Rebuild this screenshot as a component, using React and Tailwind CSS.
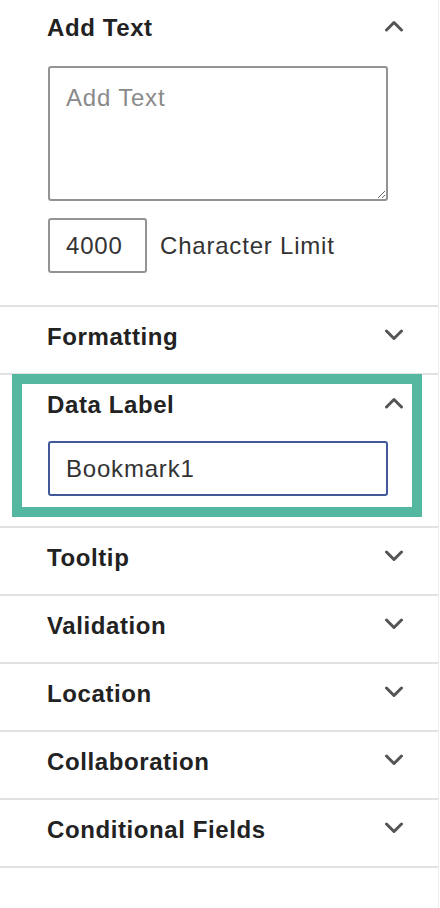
import React from "react";

const Chevron = ({ up }) => (
  <svg width="20" height="12" viewBox="0 0 20 12" className="shrink-0">
    <polyline
      points={up ? "2.5,10 10,2.5 17.5,10" : "2.5,2 10,9.5 17.5,2"}
      fill="none"
      stroke="#555"
      strokeWidth="3"
      strokeLinecap="round"
      strokeLinejoin="round"
    />
  </svg>
);

const Header = ({ title, up }) => (
  <div className="flex items-center justify-between pl-[47px] pr-[34px] h-[32px]">
    <span className="text-[24px] font-bold tracking-[0.6px] text-[#222] leading-[32px]">{title}</span>
    <span className="-mt-[4px] flex">
      <Chevron up={up} />
    </span>
  </div>
);

const Collapsed = ({ title }) => (
  <div className="pt-[14px] pb-[20px] border-b-2 border-[#e2e2e2]">
    <Header title={title} />
  </div>
);

export default function App() {
  return (
    <div className="w-[439px] min-h-[908px] bg-white border-r border-[#ececec] font-['Liberation_Sans',Arial,sans-serif]">
      <div className="pt-[12px] pb-[32px] border-b-2 border-[#e2e2e2]">
        <Header title="Add Text" up />
        <div className="pl-[48px] mt-[22px]">
          <textarea
            placeholder="Add Text"
            className="block w-[340px] h-[135px] border-2 border-[#939393] rounded-[3px] px-[16px] pt-[12px] text-[24px] tracking-[0.8px] text-[#333] placeholder:text-[#8a8a8a] outline-none resize-y font-['Liberation_Sans',Arial,sans-serif]"
          />
          <div className="flex items-center mt-[17px] gap-[13px]">
            <div className="w-[99px] h-[55px] border-2 border-[#939393] rounded-[3px] flex items-center pl-[16px] text-[24px] tracking-[0.8px] text-[#333]">
              4000
            </div>
            <span className="text-[24px] tracking-[0.8px] text-[#333]">Character Limit</span>
          </div>
        </div>
      </div>
      <Collapsed title="Formatting" />
      <div className="relative pt-[14px] pb-[30px] border-b-2 border-[#e2e2e2]">
        <Header title="Data Label" up />
        <div className="pl-[48px] mt-[20px]">
          <div className="w-[340px] h-[55px] border-2 border-[#41589a] rounded-[3px] flex items-center pl-[16px] text-[24px] tracking-[0.8px] text-[#333]">
            Bookmark1
          </div>
        </div>
        <div className="absolute left-[12px] top-[-1px] w-[410px] h-[143px] border-[10px] border-[#54b8a0] pointer-events-none" />
      </div>
      <Collapsed title="Tooltip" />
      <Collapsed title="Validation" />
      <Collapsed title="Location" />
      <Collapsed title="Collaboration" />
      <Collapsed title="Conditional Fields" />
    </div>
  );
}
